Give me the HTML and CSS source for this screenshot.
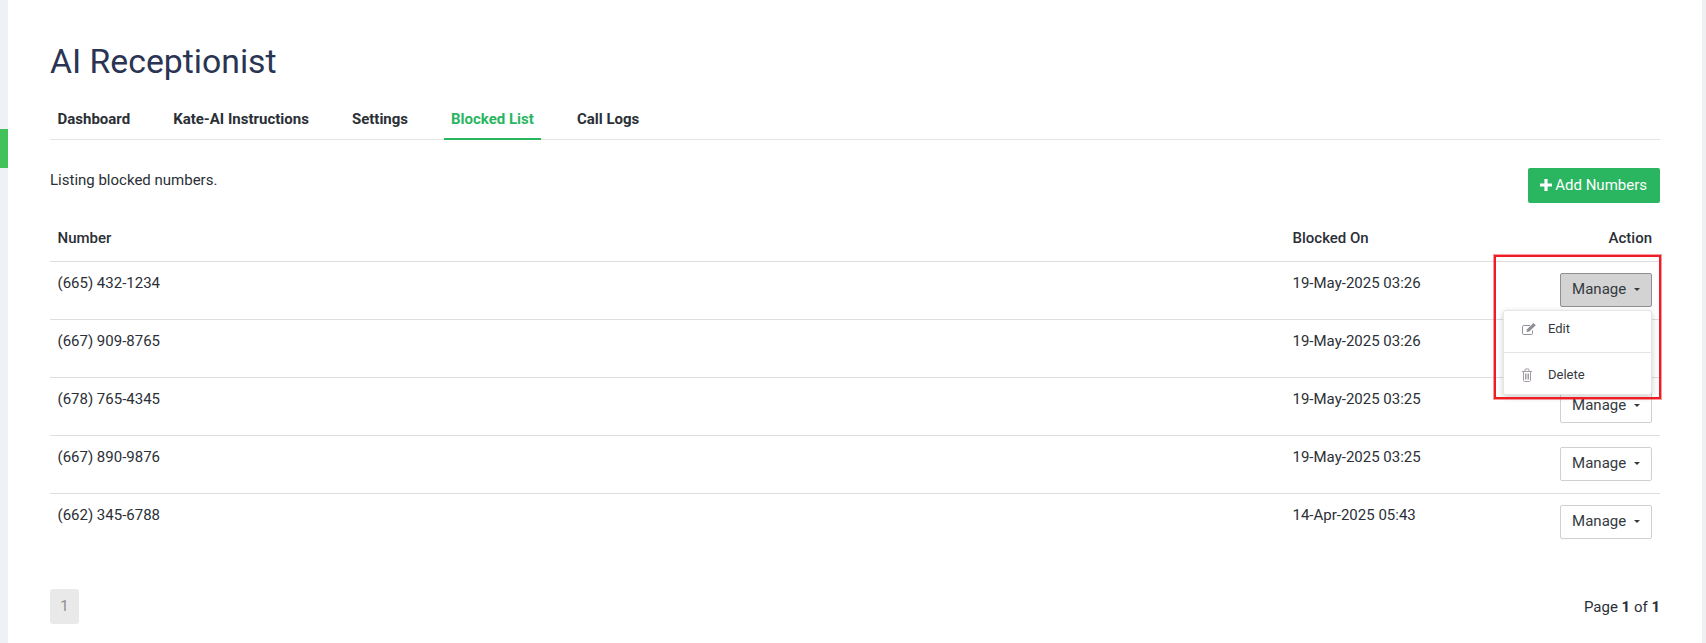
FILE: index.html
```html
<!DOCTYPE html>
<html lang="en">
<head>
    <meta charset="UTF-8">
    <meta name="viewport" content="width=device-width, initial-scale=1.0">
    <title>AI Receptionist</title>
    <link rel="stylesheet" href="styles.css">
</head>
<body>
    <div class="side-strip">
        <div class="side-marker"></div>
    </div>
    <main class="content">
        <h1>AI Receptionist</h1>

        <nav class="tabs">
            <a href="#" class="tab">Dashboard</a>
            <a href="#" class="tab">Kate-AI Instructions</a>
            <a href="#" class="tab">Settings</a>
            <a href="#" class="tab active">Blocked List</a>
            <a href="#" class="tab">Call Logs</a>
        </nav>

        <div class="list-top">
            <p>Listing blocked numbers.</p>
            <a href="#" class="add-btn">
                <svg class="plus" viewBox="0 0 12 12"><path d="M4.4 0h3.2v4.4H12v3.2H7.6V12H4.4V7.6H0V4.4h4.4z"/></svg>
                Add Numbers
            </a>
        </div>

        <table class="numbers">
            <thead>
                <tr>
                    <th class="col-number">Number</th>
                    <th class="col-date">Blocked On</th>
                    <th class="col-action">Action</th>
                </tr>
            </thead>
            <tbody>
                <tr>
                    <td>(665) 432-1234</td>
                    <td>19-May-2025 03:26</td>
                    <td class="col-action">
                        <div class="manage-wrap">
                            <button class="manage open">Manage <span class="caret"></span></button>
                            <div class="menu">
                                <a href="#" class="menu-item">
                                    <svg class="menu-icon" viewBox="0 0 14 14" fill="none" stroke="#8f8f96">
                                        <path d="M10.500 8.500v2.700c0 .7-.5 1.300-1.200 1.300H1.700c-.7 0-1.200-.6-1.200-1.300V4.800c0-.7.500-1.300 1.200-1.300H8"/>
                                        <path d="M4.500 10l.5-2.800L11.500 1l2.300 2.200L7.300 9.500z" fill="#8f8f96" stroke="none"/>
                                    </svg>
                                    Edit
                                </a>
                                <a href="#" class="menu-item">
                                    <svg class="menu-icon" viewBox="0 0 14 14" fill="none" stroke="#a39ca4">
                                        <path d="M1.500 3.500v8.800c0 .7.400 1.200 1 1.200h5c.6 0 1-.5 1-1.200V3.500"/>
                                        <path d="M0 3.500h10M3 3.500V1.500c0-.3.200-.5.500-.5h3c.3 0 .5.200.5.500v2M3.500 5.500v6M5 5.500v6M6.500 5.500v6"/>
                                    </svg>
                                    Delete
                                </a>
                            </div>
                        </div>
                    </td>
                </tr>
                <tr>
                    <td>(667) 909-8765</td>
                    <td>19-May-2025 03:26</td>
                    <td class="col-action"><button class="manage">Manage <span class="caret"></span></button></td>
                </tr>
                <tr>
                    <td>(678) 765-4345</td>
                    <td>19-May-2025 03:25</td>
                    <td class="col-action"><button class="manage">Manage <span class="caret"></span></button></td>
                </tr>
                <tr>
                    <td>(667) 890-9876</td>
                    <td>19-May-2025 03:25</td>
                    <td class="col-action"><button class="manage">Manage <span class="caret"></span></button></td>
                </tr>
                <tr>
                    <td>(662) 345-6788</td>
                    <td>14-Apr-2025 05:43</td>
                    <td class="col-action"><button class="manage">Manage <span class="caret"></span></button></td>
                </tr>
            </tbody>
        </table>

        <div class="pager">
            <span class="page-num">1</span>
            <span class="page-info">Page <b>1</b> of <b>1</b></span>
        </div>

        <!-- annotation drawn over the screenshot -->
        <div class="highlight"></div>
    </main>
    <div class="right-strip"></div>
</body>
</html>
```

FILE: styles.css
```css
* {
    box-sizing: border-box;
}
html, body {
    height: 100%;
}
body {
    margin: 0;
    display: flex;
    font-family: Roboto, sans-serif;
    font-size: 15px;
    color: #2b2f36;
    background-color: white;
    overflow: hidden;
}
.side-strip {
    width: 8px;
    flex-shrink: 0;
    padding-top: 129px;
    background-color: #eef2f7;
}
.side-marker {
    height: 39px;
    background-color: #43c15a;
}
.right-strip {
    width: 4px;
    flex-shrink: 0;
    background-color: #eef0f3;
}
.content {
    position: relative;
    flex: 1;
    padding: 40px 42px 0;
}
h1 {
    margin: 0;
    height: 50px;
    font-size: 33.75px;
    font-weight: 400;
    line-height: 44px;
    color: #2a3453;
}
/* Tabs */
.tabs {
    display: flex;
    gap: 28px;
    height: 50px;
    border-bottom: 1px solid #e4e4e4;
}
.tab {
    padding: 0 7.5px;
    height: 50px;
    line-height: 58px;
    font-weight: 700;
    color: #2b2f36;
    text-decoration: none;
}
.tab.active {
    color: #2ab55f;
    border-bottom: 2px solid #2ab55f;
}
/* Intro row */
.list-top {
    display: flex;
    justify-content: space-between;
    align-items: flex-start;
    padding-top: 28px;
    height: 85px;
}
.list-top p {
    margin: 2px 0 0;
    line-height: 20px;
}
.add-btn {
    display: flex;
    align-items: center;
    gap: 3px;
    height: 35px;
    padding: 0 13px 2px 12px;
    background-color: #2ab561;
    border-radius: 2px;
    color: white;
    font-weight: 400;
    text-decoration: none;
}
.plus {
    width: 12px;
    height: 12px;
    fill: white;
}
/* Table */
.numbers {
    width: 100%;
    table-layout: fixed;
    border-collapse: collapse;
    margin-top: -10px;
}
.numbers th {
    height: 46px;
    padding: 0 7.5px;
    text-align: left;
    font-weight: 500;
    border-bottom: 1px solid #dedede;
}
.numbers td {
    height: 58px;
    padding: 11px 7.5px 0;
    vertical-align: top;
    line-height: 20px;
    border-bottom: 1px solid #dedede;
}
.numbers tr:last-child td {
    border-bottom: none;
}
.numbers .col-number {
    width: 1235px;
}
.numbers .col-date {
    width: 225px;
}
.numbers .col-action {
    padding-right: 8px;
    text-align: right;
}
.manage-wrap {
    position: relative;
}
.manage {
    display: inline-block;
    width: 92px;
    height: 34px;
    padding: 0 0 2px;
    background-color: white;
    border: 1px solid #d0d0d0;
    border-radius: 2px;
    font-family: Roboto, sans-serif;
    font-size: 15px;
    color: #343a40;
}
.manage.open {
    background-color: #d3d3d3;
    border-color: #8f8f8f;
}
.caret {
    display: inline-block;
    margin-left: 4px;
    vertical-align: middle;
    border-top: 3px solid #343a40;
    border-left: 3px solid transparent;
    border-right: 3px solid transparent;
}
/* Dropdown */
.menu {
    position: absolute;
    top: 37px;
    right: 0;
    z-index: 2;
    width: 149px;
    height: 85px;
    background-color: white;
    border: 1px solid #e6e6e6;
    border-radius: 3px;
    box-shadow: 0 2px 6px rgba(0, 0, 0, 0.2);
    text-align: left;
}
.menu-item {
    display: flex;
    align-items: center;
    height: 41px;
    padding: 0 0 4px 18px;
    font-size: 13px;
    color: #343a40;
    text-decoration: none;
}
.menu-item + .menu-item {
    height: 42px;
    padding: 4px 0 0 18px;
    border-top: 1px solid #e4e4e4;
}
.menu-icon {
    width: 14px;
    height: 14px;
    margin-right: 12px;
}
/* Pager */
.pager {
    position: absolute;
    top: 589px;
    left: 42px;
    right: 42px;
    display: flex;
    justify-content: space-between;
    align-items: center;
}
.page-num {
    width: 29px;
    height: 35px;
    line-height: 35px;
    text-align: center;
    background-color: #e9e9e9;
    border-radius: 3px;
    color: #8d8d8d;
}
.page-info b {
    font-weight: 700;
}
/* Red annotation box */
.highlight {
    position: absolute;
    top: 255px;
    left: 1486px;
    width: 167px;
    height: 144px;
    border: 2px solid #ee1c25;
    box-shadow: 0 0 0 1px rgba(238, 28, 37, 0.45);
    z-index: 3;
}
```
